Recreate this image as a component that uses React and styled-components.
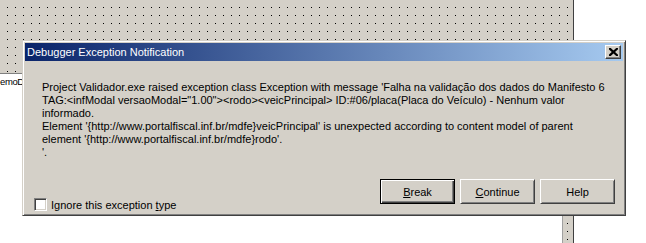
import styled, { createGlobalStyle } from "styled-components";

//=====================GLOBAL====================
const GlobalStyle = createGlobalStyle`
  html, body {
    margin: 0;
    padding: 0;
    background: #ffffff;
  }
  body {
    width: 646px;
    height: 243px;
    overflow: hidden;
    font-family: "Liberation Sans", Arial, sans-serif;
    font-size: 11px;
    color: #000;
  }
`;

const Screen = styled.div`
  position: relative;
  width: 646px;
  height: 243px;
  overflow: hidden;
  background: #ffffff;
`;

// the delphi form in design mode, with its dot grid
const DesignForm = styled.div`
  width: 574px;
  height: 243px;
  border-right: 1px solid #404040;
  background-color: #000;
  background-image: linear-gradient(to right, #d4d0c8 7px, transparent 7px),
    linear-gradient(to bottom, #d4d0c8 7px, transparent 7px);
  background-size: 8px 8px;
  padding-top: 73px;
  box-sizing: border-box;
`;

const Memo = styled.div`
  width: 563px;
  height: 100%;
  background: #ffffff;
  border-top: 1px solid #808080;
  border-right: 1px solid #a0a0a0;
  box-sizing: border-box;
  padding-top: 2px;
  font-size: 9.5px;
  line-height: 12px;
  letter-spacing: -0.4px;
`;

//=====================DIALOG====================
const Dialog = styled.div`
  position: absolute;
  left: 22px;
  top: 40px;
  width: 604px;
  height: 176px;
  box-sizing: border-box;
  display: flex;
  flex-direction: column;
  background: #d4d0c8;
  border: 1px solid;
  border-color: #d4d0c8 #404040 #404040 #d4d0c8;
  box-shadow: inset 1px 1px #ffffff, inset -1px -1px #808080;
  padding: 2px;
`;

const TitleBar = styled.div`
  height: 18px;
  display: flex;
  align-items: center;
  justify-content: space-between;
  background: linear-gradient(to right, #0a246a, #a6caf0);
  color: #ffffff;
  padding: 0 2px 0 2px;
`;

const TitleText = styled.span`
  font-size: 11px;
  line-height: 18px;
  white-space: nowrap;
`;

const CloseButton = styled.button`
  width: 16px;
  height: 14px;
  padding: 0;
  display: flex;
  align-items: center;
  justify-content: center;
  background: #d4d0c8;
  border: 1px solid;
  border-color: #ffffff #404040 #404040 #ffffff;
  box-shadow: inset -1px -1px #808080;
  box-sizing: border-box;
`;

const Body = styled.div`
  flex: 1;
  padding: 20px 9px 0 17px;
`;

const Message = styled.div`
  font-size: 11px;
  line-height: 13px;
  white-space: nowrap;
`;

const Footer = styled.div`
  display: flex;
  justify-content: space-between;
  align-items: flex-end;
  padding: 0 8px 2px 9px;
`;

const CheckRow = styled.label`
  display: flex;
  align-items: center;
  gap: 4px;
  height: 13px;
  font-size: 11px;
`;

const CheckBox = styled.span`
  width: 13px;
  height: 13px;
  box-sizing: border-box;
  background: #ffffff;
  border: 1px solid;
  border-color: #808080 #ffffff #ffffff #808080;
  box-shadow: inset 1px 1px #404040, inset -1px -1px #d4d0c8;
`;

const ButtonGroup = styled.div`
  display: flex;
  gap: 5px;
  margin-bottom: 7px;
`;

const Button = styled.button`
  width: 75px;
  height: 25px;
  box-sizing: border-box;
  padding: 0;
  font-family: "Liberation Sans", Arial, sans-serif;
  font-size: 11px;
  color: #000;
  background: #d4d0c8;
  border: 1px solid;
  border-color: ${(p) =>
    p.$default ? "#000 #000 #000 #000" : "#ffffff #404040 #404040 #ffffff"};
  box-shadow: ${(p) =>
    p.$default
      ? "inset 1px 1px #ffffff, inset -1px -1px #404040, inset -2px -2px #808080"
      : "inset 1px 1px #d4d0c8, inset -1px -1px #808080"};
`;

const CloseGlyph = () => (
  <svg width="9" height="8" viewBox="0 0 9 8">
    <path
      d="M1 0.8L8 7.2M8 0.8L1 7.2"
      stroke="#000"
      strokeWidth="2.2"
      strokeLinecap="square"
    />
  </svg>
);

const App = () => {
  return (
    <>
      <GlobalStyle />
      <Screen>
        <DesignForm>
          <Memo>emoD</Memo>
        </DesignForm>
        <Dialog>
          <TitleBar>
            <TitleText>Debugger Exception Notification</TitleText>
            <CloseButton>
              <CloseGlyph />
            </CloseButton>
          </TitleBar>
          <Body>
            <Message>
              Project Validador.exe raised exception class Exception with
              message 'Falha na validação dos dados do Manifesto 6
              <br />
              TAG:&lt;infModal versaoModal="1.00"&gt;&lt;rodo&gt;&lt;veicPrincipal&gt;
              ID:#06/placa(Placa do Veículo) - Nenhum valor
              <br />
              informado.
              <br />
              Element '{"{"}http://www.portalfiscal.inf.br/mdfe{"}"}veicPrincipal'
              is unexpected according to content model of parent
              <br />
              element '{"{"}http://www.portalfiscal.inf.br/mdfe{"}"}rodo'.
              <br />
              '.
            </Message>
          </Body>
          <Footer>
            <CheckRow>
              <CheckBox />
              <span>
                Ignore this exception <u>t</u>ype
              </span>
            </CheckRow>
            <ButtonGroup>
              <Button $default>
                <u>B</u>reak
              </Button>
              <Button>
                <u>C</u>ontinue
              </Button>
              <Button>Help</Button>
            </ButtonGroup>
          </Footer>
        </Dialog>
      </Screen>
    </>
  );
};

export default App;
